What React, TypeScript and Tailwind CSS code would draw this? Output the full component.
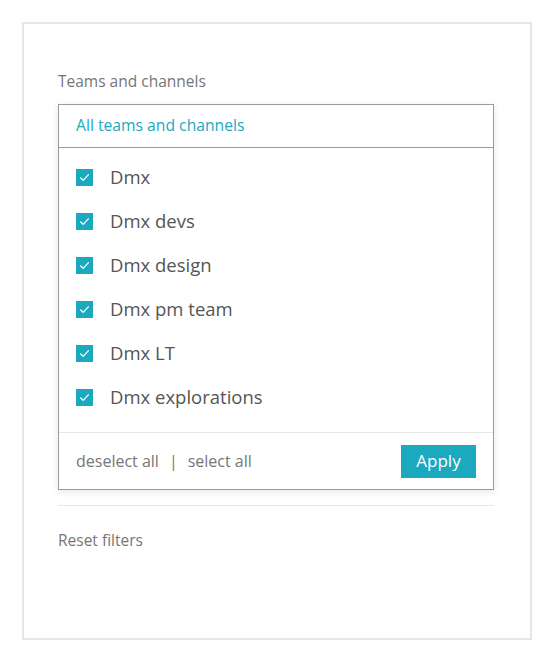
import React from "react";

const items = ["Dmx", "Dmx devs", "Dmx design", "Dmx pm team", "Dmx LT", "Dmx explorations"];

function Check() {
  return (
    <span className="flex h-[17px] w-[17px] items-center justify-center bg-[#1aa9bf]">
      <svg width="11" height="9" viewBox="0 0 11 9" fill="none">
        <path d="M1.5 4.8 L4.2 7.3 L9.5 1.6" stroke="white" strokeWidth="1.2" strokeLinecap="round" strokeLinejoin="round" />
      </svg>
    </span>
  );
}

export default function App() {
  return (
    <div className="min-h-[662px] bg-white pl-[22px] pt-[22px]" style={{ fontFamily: "'Open Sans', 'Noto Sans', sans-serif" }}>
      <div className="h-[618px] w-[510px] border-2 border-[#e6e6e6] bg-white pl-[34px] pt-[45px]">
        <div className="text-[15.5px] leading-[24px] text-[#767676]">Teams and channels</div>
        <div className="mt-[11px] w-[436px] border border-[#9b9b9b] bg-white shadow-[0_2px_8px_rgba(0,0,0,0.10)]">
          <div className="flex h-[43px] items-center border-b border-[#9b9b9b] pl-[17px] text-[15.7px] text-[#1aa9bf]">
            All teams and channels
          </div>
          <div className="pb-[13px] pt-[7px]">
            {items.map((t) => (
              <div key={t} className="flex h-[44px] items-center pl-[17px]">
                <Check />
                <span className="ml-[17px] text-[18.5px] text-[#555555]">{t}</span>
              </div>
            ))}
          </div>
          <div className="flex h-[57px] items-center justify-between border-t border-[#e6e6e6] pl-[17px] pr-[17px]">
            <div className="flex items-center text-[16px] text-[#767676]">
              <span>deselect all</span>
              <span className="mx-[10px]">|</span>
              <span>select all</span>
            </div>
            <button className="flex h-[33px] w-[75px] items-center justify-center bg-[#1aa9bf] text-[17px] text-white">
              Apply
            </button>
          </div>
        </div>
        <div className="mt-[15px] h-px w-[436px] bg-[#e6e6e6]" />
        <div className="mt-[22px] text-[15.5px] leading-[24px] text-[#767676]">Reset filters</div>
      </div>
    </div>
  );
}
